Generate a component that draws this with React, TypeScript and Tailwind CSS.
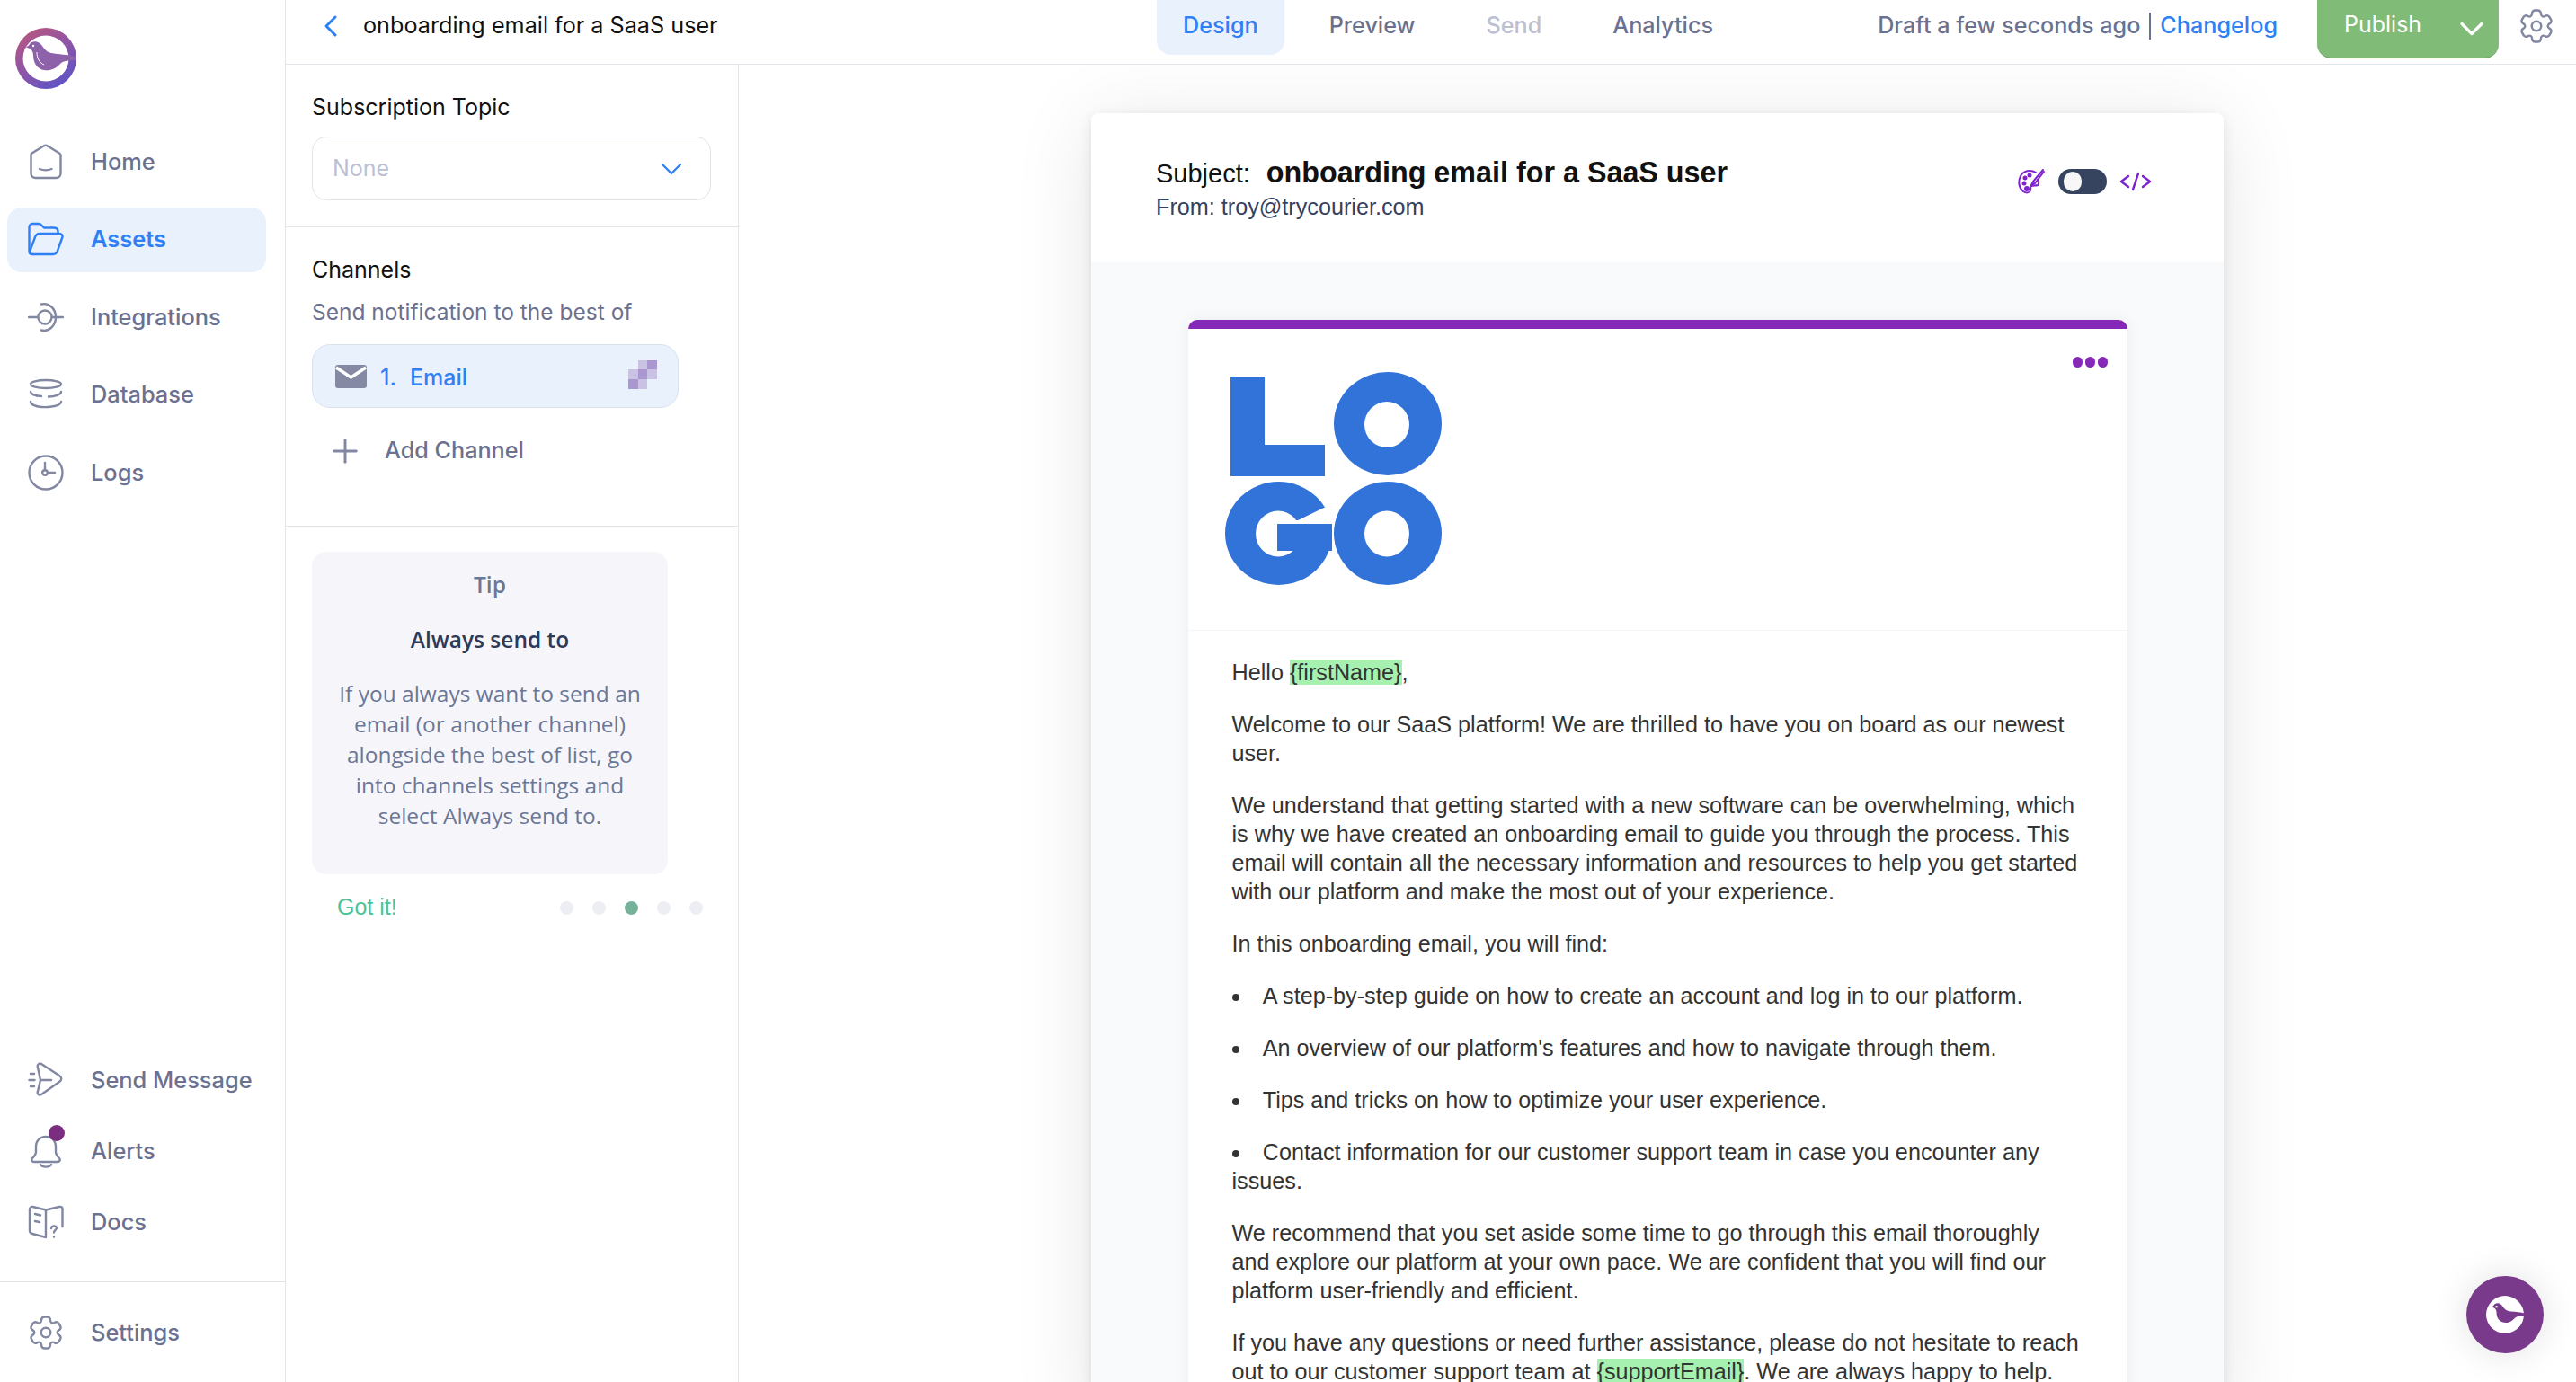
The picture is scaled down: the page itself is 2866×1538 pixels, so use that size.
import { ChevronDown, ChevronLeft, Plus } from "lucide-react";
import type { ReactNode } from "react";

const stroke = "#8287a2";

const Icon = ({ children, color = stroke }: { children: ReactNode; color?: string }) => (
  <svg width="40" height="40" viewBox="0 0 40 40" fill="none" stroke={color} strokeWidth="2.4" strokeLinecap="round" strokeLinejoin="round">
    {children}
  </svg>
);

const GEAR =
  "M2 12.88v-1.76c0-1.04.85-1.9 1.9-1.9 1.81 0 2.55-1.28 1.64-2.85-.52-.9-.21-2.07.7-2.59l1.73-.99c.79-.47 1.81-.19 2.28.6l.11.19c.9 1.57 2.38 1.57 3.29 0l.11-.19c.47-.79 1.49-1.07 2.28-.6l1.73.99c.91.52 1.22 1.69.7 2.59-.91 1.57-.17 2.85 1.64 2.85 1.04 0 1.9.85 1.9 1.9v1.76c0 1.04-.85 1.9-1.9 1.9-1.81 0-2.55 1.28-1.64 2.85.52.91.21 2.07-.7 2.59l-1.73.99c-.79.47-1.81.19-2.28-.6l-.11-.19c-.9-1.57-2.38-1.57-3.29 0l-.11.19c-.47.79-1.49 1.07-2.28.6l-1.73-.99a1.899 1.899 0 0 1-.7-2.59c.91-1.57.17-2.85-1.64-2.85-1.05 0-1.9-.86-1.9-1.9Z";

const Gear = () => (
  <svg width="42" height="42" viewBox="0 0 24 24" fill="none" stroke={stroke} strokeWidth="1.4" strokeLinejoin="round" className="shrink-0 rotate-90">
    <path d={GEAR} />
    <circle cx="12" cy="12" r="3" />
  </svg>
);

const icons: Record<string, ReactNode> = {
  Home: (
    <Icon>
      <path d="M4.500 10.500 17.500 2.500a4 4 0 0 1 4.500 0L35 10.500a3 3 0 0 1 1.500 3V33a5 5 0 0 1-5 5h-23a5 5 0 0 1-5-5V13a3 3 0 0 1 1-2.500Z" />
      <path d="M13 28c4 1.600 9.500 1.600 13.500 0" />
    </Icon>
  ),
  Assets: (
    <Icon color="#2f80f5">
      <path d="M5 36c-2 0-3.500-1.500-3.500-3.500V6c0-2.500 1.500-4 4-4h6.500c2 0 3 1 4 2.500L18 6.500h11c3 0 4.500 1.500 4.500 4.500v2" />
      <path d="M5 36c-2.500 0-3.500-2-2.600-4L8 17c.8-2.500 2.500-4 5-4h22c2.500 0 4 2 3.400 4L33 32c-.8 2.500-2.500 4-5 4H5Z" />
    </Icon>
  ),
  Integrations: (
    <Icon>
      <circle cx="19" cy="20" r="7.500" />
      <path d="M1 20h10M27 20h12" />
      <path d="M15 5.500c8-2 16 4.500 16 14.500s-8 16.500-16 14.500" />
    </Icon>
  ),
  Database: (
    <Icon>
      <path d="M3 7.500C3 5 10.500 3 20 3s17 2 17 4.500S29.500 12 20 12 3 10 3 7.500Z" />
      <path d="M3 16c0 2.500 5 4.500 12 5M37 16c0 3-7 5.500-14 5.500" />
      <path d="M3 27c0 3 5 5.500 12 6 3 .2 7 .2 10-.2 7-.8 12-3 12-5.800" />
      <path d="M10 20.500h.1M10 32h.1" />
    </Icon>
  ),
  Logs: (
    <Icon>
      <circle cx="20" cy="20" r="18.500" />
      <circle cx="19" cy="20" r="2.800" />
      <path d="M19 17V9M22 20h8" />
    </Icon>
  ),
  "Send Message": (
    <Icon>
      <path d="M11 6c-1-3 1-5 4-4l20 13c3 2 3 5 0 7L15 36c-3 1.500-5-.5-4-3.500L14 20 11 6Z" />
      <path d="M14 20h12M1.500 20h6M3 13h4M3 27h4" />
    </Icon>
  ),
  Alerts: (
    <Icon>
      <path d="M20 4c-7 0-11 5-11 11v6c0 3-2 5-4 7-1.500 2-.5 4 2 4h26c2.500 0 3.500-2 2-4-2-2-4-4-4-7v-6c0-6-4-11-11-11Z" />
      <path d="M14 35c2 3.500 10 3.500 12 0" />
    </Icon>
  ),
  Docs: (
    <Icon>
      <path d="M20 37 5 33c-2-.5-3-1.500-3-3.500V6c0-2 1.500-3.500 3.500-3L20 6.500V37Z" />
      <path d="M20 6.500 35 3c2-.5 3.500.5 3.500 2.500V25" />
      <path d="M8 11l6 1.500M8 19l5 1" />
      <path d="M26 27c0-3 5-3.500 6-1 .8 2-3 3-3 5.500M29 36.500h.1" />
    </Icon>
  ),
  Settings: <Gear />,
};

const NavItem = ({ label, active }: { label: string; active?: boolean }) => (
  <div className={`relative mx-2 flex h-[72px] w-[288px] shrink-0 items-center rounded-[16px] ${active ? "bg-[#e8f1fc] text-[#2f80f5]" : "text-[#6b7190]"}`}>
    <span className="ml-[23px] flex w-[40px] items-center justify-center">{icons[label]}</span>
    <span className={`ml-[30px] text-[25.4px] ${active ? "font-semibold" : "font-medium"}`}>{label}</span>
    {label === "Alerts" && <span className="absolute left-[46px] top-[7px] h-[18px] w-[18px] rounded-full bg-[#7b2d80]" />}
  </div>
);

const BIRD =
  "M12 21.500 15 19.500C17 15 23 14 27 17C31 20 33 27 40 28C48 30 58 29 67 32L67 36C58 36 53 37 50 40C45 46 38 48 32 47C25 46 20 40 20 30C20 27 18 24 16 23Z";

const AppLogo = () => (
  <svg width="68" height="68" viewBox="0 0 68 68" className="ml-[17px] mt-[31px] shrink-0">
    <defs>
      <linearGradient id="ring" x1="0.15" y1="0" x2="0.8" y2="1">
        <stop offset="0" stopColor="#b9567e" />
        <stop offset="0.5" stopColor="#8d55a8" />
        <stop offset="1" stopColor="#5a53c8" />
      </linearGradient>
    </defs>
    <circle cx="34" cy="34" r="34" fill="url(#ring)" />
    <circle cx="34" cy="34" r="25.500" fill="#fff" />
    <path d={BIRD} fill="#8d62a8" />
    <path d="M24 27c0 7 3 12 8 14" stroke="#fff" strokeWidth="1" fill="none" />
    <circle cx="20" cy="20" r="1.200" fill="#fff" />
  </svg>
);

const Chat = () => (
  <div className="absolute left-[2744px] top-[1420px] flex h-[86px] w-[86px] items-center justify-center rounded-full bg-[#7a3a8c] shadow-[0_0_40px_rgba(0,0,0,0.12)]">
    <svg width="46" height="46" viewBox="0 0 68 68">
      <circle cx="34" cy="34" r="31" fill="#fff" />
      <path d={BIRD} fill="#7a3a8c" />
      <circle cx="20" cy="21" r="1.800" fill="#fff" />
    </svg>
  </div>
);

const EmailLogo = () => (
  <svg width="241" height="237" viewBox="0 0 241 237">
    <path d="M6 5h38v76h67v35H6Z" fill="#3173d8" />
    <ellipse cx="181" cy="57.500" rx="60" ry="57.500" fill="#3173d8" />
    <ellipse cx="180" cy="58.500" rx="25" ry="25.500" fill="#fff" />
    <ellipse cx="59.500" cy="179.500" rx="59.500" ry="57.500" fill="#3173d8" />
    <ellipse cx="59" cy="180" rx="25" ry="25.500" fill="#fff" />
    <path d="M81 165 110 151H121V169H58V165Z" fill="#fff" />
    <path d="M58 169h61v30H58Z" fill="#3173d8" />
    <ellipse cx="181" cy="179.500" rx="60" ry="57.500" fill="#3173d8" />
    <ellipse cx="180" cy="180" rx="25" ry="25.500" fill="#fff" />
  </svg>
);

const Var = ({ children }: { children: ReactNode }) => <span className="bg-[#a6f0b0]">{children}</span>;

const Email = () => (
  <div className="relative mt-16 w-[1045px] bg-white shadow-[0_0_16px_rgba(0,0,0,0.06)]">
    <div className="h-[10px] rounded-t-[10px] bg-[#8629b8]" />
    <div className="absolute right-[22px] top-[41px] flex gap-[3px]">
      <span className="h-[12px] w-[11px] rounded-full bg-[#8629b8]" />
      <span className="h-[12px] w-[11px] rounded-full bg-[#8629b8]" />
      <span className="h-[12px] w-[11px] rounded-full bg-[#8629b8]" />
    </div>
    <div className="h-[336px] border-b border-[#f3f4f6] pl-[41px] pt-[48px]">
      <EmailLogo />
    </div>
    <div className="flex flex-col gap-[26px] pb-[40px] pl-[49px] pr-[50px] pt-[30px] font-['Liberation_Sans',sans-serif] text-[25.2px] leading-[32px] text-[#333]">
      <p>
        Hello <Var>{"{firstName}"}</Var>,
      </p>
      <p>Welcome to our SaaS platform! We are thrilled to have you on board as our newest user.</p>
      <p>
        We understand that getting started with a new software can be overwhelming, which is why we have created an onboarding email to guide you through the process. This email will contain all the necessary information and resources to help you get started with our platform and make the most out of your experience.
      </p>
      <p>In this onboarding email, you will find:</p>
      <ul className="flex list-inside list-disc flex-col gap-[26px]">
        <li>A step-by-step guide on how to create an account and log in to our platform.</li>
        <li>An overview of our platform's features and how to navigate through them.</li>
        <li>Tips and tricks on how to optimize your user experience.</li>
        <li>Contact information for our customer support team in case you encounter any issues.</li>
      </ul>
      <p>
        We recommend that you set aside some time to go through this email thoroughly and explore our platform at your own pace. We are confident that you will find our platform user-friendly and efficient.
      </p>
      <p>
        If you have any questions or need further assistance, please do not hesitate to reach out to our customer support team at <Var>{"{supportEmail}"}</Var>. We are always happy to help.
      </p>
    </div>
  </div>
);

const Palette = () => (
  <svg width="30" height="28" viewBox="0 0 30 28" fill="none" stroke="#7e22ce" strokeWidth="2" strokeLinecap="round" strokeLinejoin="round">
    <path d="M20 4C14 0 6 2 3 8c-3 6-2 13 3 17 3 2 7 2 8-1 1-2-1-4 1-5 2-1 5 0 7-1 2-2 1-5 0-6" />
    <path d="M28 1 17 14l-2 4 4-2L29 3" />
    <circle cx="8" cy="10" r="1.500" fill="#7e22ce" />
    <circle cx="13" cy="7" r="1.500" fill="#7e22ce" />
    <circle cx="7" cy="16" r="1.500" fill="#7e22ce" />
    <circle cx="10" cy="22" r="2" fill="#7e22ce" />
  </svg>
);

const CodeTag = () => (
  <svg width="36" height="22" viewBox="0 0 36 22" fill="none" stroke="#7e22ce" strokeWidth="2.4" strokeLinecap="round" strokeLinejoin="round" className="ml-[14px]">
    <path d="M10 5 2 11l8 6M26 5l8 6-8 6M21 2l-6 18" />
  </svg>
);

const Tab = ({ label, className }: { label: string; className: string }) => (
  <div className={`flex h-[61px] items-center rounded-b-[16px] px-[29px] pb-[3px] text-[25.2px] font-medium ${className}`}>{label}</div>
);

const App = () => {
  return (
    <div className="relative flex h-[1538px] w-[2866px] overflow-hidden bg-white font-['Inter',sans-serif]">
      <aside className="flex h-full w-[318px] shrink-0 flex-col border-r border-[#e3e4ea]">
        <AppLogo />
        <nav className="mt-[45px] flex flex-col gap-[14.5px]">
          <NavItem label="Home" />
          <NavItem label="Assets" active />
          <NavItem label="Integrations" />
          <NavItem label="Database" />
          <NavItem label="Logs" />
        </nav>
        <div className="mb-[30px] mt-auto flex flex-col gap-[7px]">
          <NavItem label="Send Message" />
          <NavItem label="Alerts" />
          <NavItem label="Docs" />
        </div>
        <div className="border-t border-[#e3e4ea] pb-[19px] pt-[20px]">
          <NavItem label="Settings" />
        </div>
      </aside>

      <div className="flex min-w-0 flex-1 flex-col">
        <header className="flex h-[72px] shrink-0 items-start border-b border-[#e3e4ea]">
          <div className="flex h-[58px] w-[969px] items-center">
            <ChevronLeft size={40} strokeWidth={1.8} className="ml-[30px] text-[#2f80f5]" />
            <span className="ml-[16px] text-[25.2px] text-[#111]">onboarding email for a SaaS user</span>
          </div>
          <div className="flex gap-[21px]">
            <Tab label="Design" className="bg-[#e8f1fc] text-[#2f80f5]" />
            <Tab label="Preview" className="text-[#6b7190]" />
            <Tab label="Send" className="text-[#bcc0d2]" />
            <Tab label="Analytics" className="text-[#6b7190]" />
          </div>
          <div className="ml-auto flex items-start pr-[23px]">
            <div className="flex h-[58px] items-center text-[25.2px] font-medium text-[#6b7190]">
              <span>Draft a few seconds ago</span>
              <span className="mx-[10px] h-[30px] w-[2px] bg-[#6b7190]" />
              <span className="text-[#2f80f5]">Changelog</span>
            </div>
            <div className="ml-[44px] flex h-[65px] w-[202px] items-center justify-between rounded-b-[16px] border-b border-[#6aa362] bg-[#80bb78] pb-[8px] pl-[30px] pr-[8px] text-[25px] text-white">
              <span>Publish</span>
              <ChevronDown size={44} strokeWidth={1.8} className="mt-[8px]" />
            </div>
            <div className="ml-[21px] mt-[8px]">
              <Gear />
            </div>
          </div>
        </header>

        <div className="flex min-h-0 flex-1">
          <section className="w-[504px] shrink-0 border-r border-[#e3e4ea]">
            <div className="border-b border-[#e3e4ea] pb-[29px] pl-[29px] pt-[31px]">
              <div className="text-[25px] leading-[32px] text-[#111]">Subscription Topic</div>
              <div className="mt-[17px] flex h-[71px] w-[444px] items-center justify-between rounded-[16px] border border-[#e3e4ea] pl-[22px] pr-[23px] text-[25px] text-[#bcc0d4]">
                <span>None</span>
                <ChevronDown size={40} strokeWidth={1.4} className="text-[#2f80f5]" />
              </div>
            </div>
            <div className="border-b border-[#e3e4ea] pb-[67px] pl-[29px] pt-[31px]">
              <div className="text-[25px] leading-[32px] text-[#111]">Channels</div>
              <div className="mt-[15px] text-[24.5px] leading-[32px] text-[#6b7190]">Send notification to the best of</div>
              <div className="mt-[20px] flex h-[71px] w-[408px] items-center rounded-[20px] border border-[#d9e3ef] bg-[#e8f1fc] pl-[25px] pr-[23px] text-[25px] font-medium text-[#2f80f5]">
                <svg width="35" height="26" viewBox="0 0 35 26">
                  <rect width="35" height="26" rx="3" fill="#8589a4" />
                  <path d="M1 3 17.500 14 34 3" fill="none" stroke="#fff" strokeWidth="3.500" />
                </svg>
                <span className="ml-[15px] pt-[5px]">1.</span>
                <span className="ml-[15px] pt-[5px]">Email</span>
                <svg width="32" height="33" viewBox="0 0 3 3" className="mb-[5px] ml-auto" shapeRendering="crispEdges">
                  <rect x="1" y="0" width="1" height="1" fill="#c9c2e2" />
                  <rect x="2" y="0" width="1" height="1" fill="#ab97cf" />
                  <rect x="0" y="1" width="1" height="1" fill="#c9c2e2" />
                  <rect x="1" y="1" width="1" height="1" fill="#ab97cf" />
                  <rect x="2" y="1" width="1" height="1" fill="#c9c2e2" />
                  <rect x="0" y="2" width="1" height="1" fill="#ab97cf" />
                  <rect x="1" y="2" width="1" height="1" fill="#c9c2e2" />
                </svg>
              </div>
              <div className="mt-[32px] flex h-8 items-center text-[25.2px] font-medium text-[#6b7190]">
                <Plus size={42} strokeWidth={1.7} className="ml-[16px] text-[#8287a2]" />
                <span className="ml-[23px]">Add Channel</span>
              </div>
            </div>
            <div className="pl-[29px] pt-[28px] font-['Open_Sans',sans-serif]">
              <div className="flex h-[359px] w-[396px] flex-col items-center rounded-[16px] bg-[#f6f6fa] pt-[21px] text-center">
                <div className="text-[24.5px] font-semibold leading-[32px] text-[#6b7797]">Tip</div>
                <div className="mt-[29px] text-[24.5px] font-semibold leading-[32px] text-[#2d3a59]">Always send to</div>
                <p className="mt-[27px] w-[360px] text-[24.5px] leading-[34px] text-[#6b7797]">
                  If you always want to send an email (or another channel) alongside the best of list, go into channels settings and select Always send to.
                </p>
              </div>
              <div className="mt-[20px] flex h-[34px] w-[435px] items-center pl-[28px]">
                <span className="font-['Liberation_Sans',sans-serif] text-[25px] text-[#4cc397]">Got it!</span>
                <div className="ml-auto flex gap-[21px]">
                  <span className="h-[15px] w-[15px] rounded-full bg-[#eceef4]" />
                  <span className="h-[15px] w-[15px] rounded-full bg-[#eceef4]" />
                  <span className="h-[15px] w-[15px] rounded-full bg-[#75b29a]" />
                  <span className="h-[15px] w-[15px] rounded-full bg-[#eceef4]" />
                  <span className="h-[15px] w-[15px] rounded-full bg-[#eceef4]" />
                </div>
              </div>
            </div>
          </section>

          <main className="flex min-w-0 flex-1 justify-center overflow-hidden pt-[54px]">
            <div className="h-fit w-[1260px] shrink-0 rounded-t-[8px] bg-[#f9fafc] shadow-[0_4px_14px_rgba(0,0,0,0.1),0_10px_90px_rgba(0,0,0,0.1)]">
              <div className="flex h-[166px] items-start rounded-t-[8px] bg-white pl-[72px] pr-[80px] font-['Liberation_Sans',sans-serif]">
                <div className="pt-[48px]">
                  <div className="flex items-baseline leading-[36px] text-[#111]">
                    <span className="text-[29px]">Subject:</span>
                    <span className="ml-[18px] text-[32.3px] font-bold">onboarding email for a SaaS user</span>
                  </div>
                  <div className="mt-[3px] text-[25.2px] leading-[32px] text-[#36415f]">From: troy@trycourier.com</div>
                </div>
                <div className="ml-auto mt-[62px] flex items-center">
                  <Palette />
                  <span className="ml-[15px] flex h-[28px] w-[54px] items-center rounded-full bg-[#36445f] pl-[6px]">
                    <span className="h-[22px] w-[20px] rounded-full bg-[#f7f7f7]" />
                  </span>
                  <CodeTag />
                </div>
              </div>
              <div className="flex justify-center">
                <Email />
              </div>
            </div>
          </main>
        </div>
      </div>
      <Chat />
    </div>
  );
};

export default App;
